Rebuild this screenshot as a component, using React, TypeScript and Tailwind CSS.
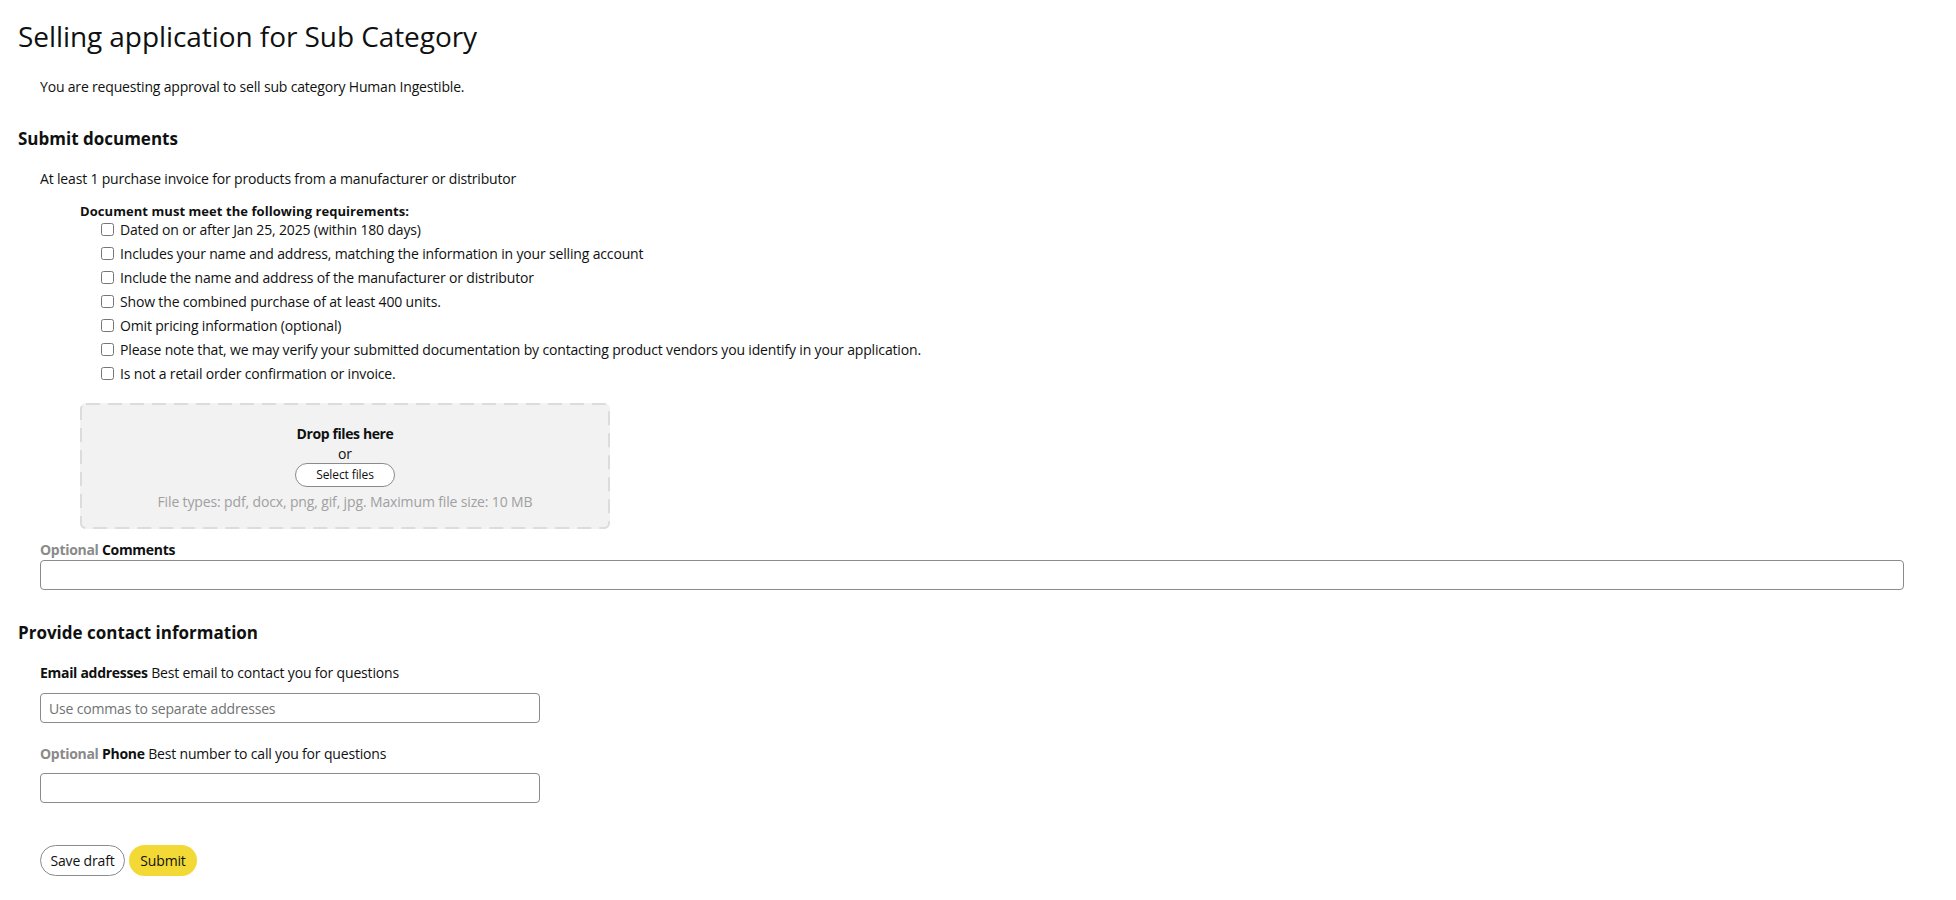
import React from "react";

const items = [
  "Dated on or after Jan 25, 2025 (within 180 days)",
  "Includes your name and address, matching the information in your selling account",
  "Include the name and address of the manufacturer or distributor",
  "Show the combined purchase of at least 400 units.",
  "Omit pricing information (optional)",
  "Please note that, we may verify your submitted documentation by contacting product vendors you identify in your application.",
  "Is not a retail order confirmation or invoice.",
];

export default function App() {
  return (
    <div
      className="min-h-[900px] w-full bg-white text-[#0f1111] px-[18px] pt-[18px]"
      style={{ fontFamily: '"Open Sans", "Noto Sans", Arial, sans-serif' }}
    >
      <h1 className="text-[28px] leading-[36px] font-normal tracking-[-0.07px]">Selling application for Sub Category</h1>

      <p className="ml-[22px] mt-[23px] text-[14px] leading-[20px] tracking-[-0.18px]">
        You are requesting approval to sell sub category Human Ingestible.
      </p>

      <h2 className="mt-[30px] text-[17px] leading-[24px] font-bold">Submit documents</h2>

      <div className="ml-[22px] mr-[34px]">
        <p className="mt-[18px] text-[14px] leading-[20px] tracking-[-0.17px]">
          At least 1 purchase invoice for products from a manufacturer or distributor
        </p>

        <div className="ml-[40px] mt-[16px]">
          <div className="text-[13px] leading-[13px] font-bold tracking-[0.06px]">Document must meet the following requirements:</div>
          <ul className="ml-[21px] -mt-[1px] flex flex-col">
            {items.map((t) => (
              <li key={t} className="flex h-[24px] items-center gap-[6px] text-[14px] tracking-[-0.16px]">
                <input type="checkbox" className="m-0 h-[13px] w-[13px]" />
                <span>{t}</span>
              </li>
            ))}
          </ul>

          <div className="relative mt-[18px] flex h-[126px] w-[530px] flex-col items-center rounded-[6px] bg-[#f2f2f2] pt-[21px]">
            <svg className="pointer-events-none absolute inset-0" width="530" height="126">
              <rect
                x="1"
                y="1"
                width="528"
                height="124"
                rx="5"
                ry="5"
                fill="none"
                stroke="#dcdcdc"
                strokeWidth="2"
                strokeDasharray="14 8"
              />
            </svg>
            <div className="text-[14px] leading-[20px] font-bold tracking-[-0.4px]">Drop files here</div>
            <div className="text-[14px] leading-[20px]">or</div>
            <button className="-mt-[1px] h-[24px] w-[100px] rounded-full border border-[#888c8c] bg-white text-[12px] leading-[20px] tracking-[-0.1px] text-[#0f1111]">
              Select files
            </button>
            <div className="mt-[5px] text-[14px] leading-[20px] tracking-[-0.14px] text-[#a0a0a0]">
              File types: pdf, docx, png, gif, jpg. Maximum file size: 10 MB
            </div>
          </div>
        </div>

        <div className="mt-[11px] text-[14px] leading-[20px] font-bold tracking-[-0.3px]">
          <span className="text-[#8a8a8a]">Optional</span> Comments
        </div>
        <input
          type="text"
          className="block h-[30px] w-[1864px] rounded-[4px] border border-[#888c8c] px-[8px] text-[14px] outline-none"
        />
      </div>

      <h2 className="mt-[31px] text-[17px] leading-[24px] font-bold">Provide contact information</h2>

      <div className="ml-[22px]">
        <div className="mt-[18px] text-[14px] leading-[20px] tracking-[-0.17px]">
          <span className="font-bold tracking-[-0.3px]">Email addresses</span> Best email to contact you for questions
        </div>
        <input
          type="text"
          placeholder="Use commas to separate addresses"
          className="mt-[10px] block h-[30px] w-[500px] rounded-[4px] border border-[#888c8c] px-[8px] text-[14px] tracking-[-0.17px] outline-none placeholder:text-[#6f7373]"
        />

        <div className="mt-[21px] text-[14px] leading-[20px] tracking-[-0.17px]">
          <span className="font-bold tracking-[-0.3px] text-[#8a8a8a]">Optional</span>{" "}
          <span className="font-bold tracking-[-0.3px]">Phone</span> Best number to call you for questions
        </div>
        <input
          type="text"
          className="mt-[9px] block h-[30px] w-[500px] rounded-[4px] border border-[#888c8c] px-[8px] text-[14px] outline-none"
        />

        <div className="mt-[42px] flex gap-[4px]">
          <button className="h-[31px] w-[85px] rounded-full border border-[#888c8c] bg-white text-[14px] tracking-[-0.17px] text-[#0f1111]">
            Save draft
          </button>
          <button className="h-[31px] w-[68px] rounded-full bg-[#f2d935] text-[14px] tracking-[-0.17px] text-[#0f1111]">
            Submit
          </button>
        </div>
      </div>
    </div>
  );
}
